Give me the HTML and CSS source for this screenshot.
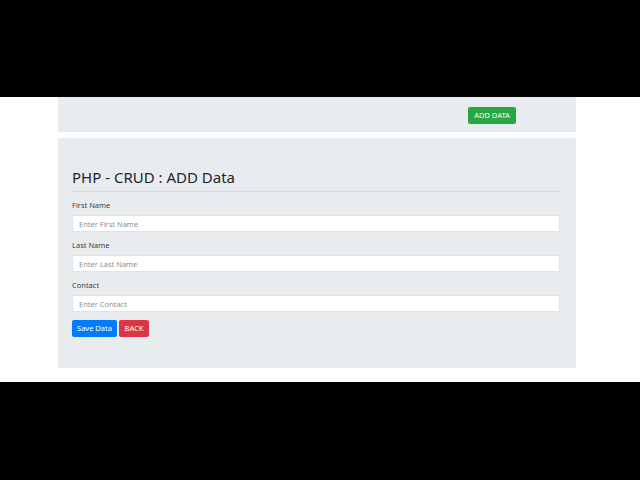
FILE: index.html
```html
<!DOCTYPE html>
<html>
<head>
<meta charset="utf-8">
<link rel="stylesheet" href="styles.css">
</head>
<body>
<div class="stage">
  <div class="page">
    <div class="topbar">
      <a class="btn btn-green">ADD DATA</a>
    </div>
    <div class="card">
      <h2 class="title">PHP - CRUD : ADD Data</h2>
      <div class="rule"></div>
      <div class="group">
        <label class="label">First Name</label>
        <input class="field" type="text" placeholder="Enter First Name">
      </div>
      <div class="group">
        <label class="label">Last Name</label>
        <input class="field" type="text" placeholder="Enter Last Name">
      </div>
      <div class="group">
        <label class="label">Contact</label>
        <input class="field" type="text" placeholder="Enter Contact">
      </div>
      <div class="actions">
        <button class="btn btn-blue">Save Data</button>
        <button class="btn btn-red">BACK</button>
      </div>
    </div>
  </div>
</div>
</body>
</html>
```

FILE: styles.css
```css
html, body {
  margin: 0;
  padding: 0;
  background: #000;
  height: 480px;
  overflow: hidden;
}
body {
  font-family: "Noto Sans", "Open Sans", sans-serif;
  color: #212529;
}
.stage {
  margin-top: 97px;
  height: 285px;
  background: #fff;
  display: flex;
  justify-content: flex-start;
}
.page {
  margin-left: 58px;
  width: 518px;
  display: flex;
  flex-direction: column;
  gap: 6px;
}
.topbar {
  height: 35px;
  background: #e9ecef;
  display: flex;
  align-items: center;
  justify-content: flex-end;
  padding-right: 60px;
  box-sizing: border-box;
}
.btn {
  display: inline-flex;
  align-items: center;
  justify-content: center;
  border: none;
  border-radius: 2px;
  color: #fff;
  font-family: "Noto Sans", "Open Sans", sans-serif;
  font-size: 7.5px;
  line-height: 1;
  height: 17px;
  padding: 0;
  white-space: nowrap;
  box-sizing: border-box;
}
.btn-green {
  background: #28a745;
  width: 48px;
  margin-top: 2px;
}
.btn-blue {
  background: #007bff;
  width: 45px;
}
.btn-red {
  background: #dc3545;
  width: 30px;
}
.card {
  height: 230px;
  background: #e9ecef;
  padding: 28px 16px 0 14px;
  box-sizing: border-box;
  display: flex;
  flex-direction: column;
}
.title {
  margin: 0;
  font-weight: 400;
  font-size: 15px;
  line-height: 22px;
  color: #212529;
}
.rule {
  height: 1px;
  background: #d8dbde;
  margin-top: 3px;
  margin-bottom: 7px;
}
.group {
  display: flex;
  flex-direction: column;
  margin-bottom: 7px;
}
.label {
  font-size: 7.5px;
  line-height: 12px;
  margin-bottom: 4px;
  color: #3d4247;
}
.field {
  height: 17px;
  box-sizing: border-box;
  border: 1px solid #dfe3e7;
  border-radius: 2px;
  background: #fff;
  padding: 0 6px;
  font-family: "Noto Sans", "Open Sans", sans-serif;
  font-size: 7.5px;
  outline: none;
}
.field::placeholder {
  color: #8a9096;
}
.actions {
  display: flex;
  gap: 2px;
  margin-top: 1px;
}
```
